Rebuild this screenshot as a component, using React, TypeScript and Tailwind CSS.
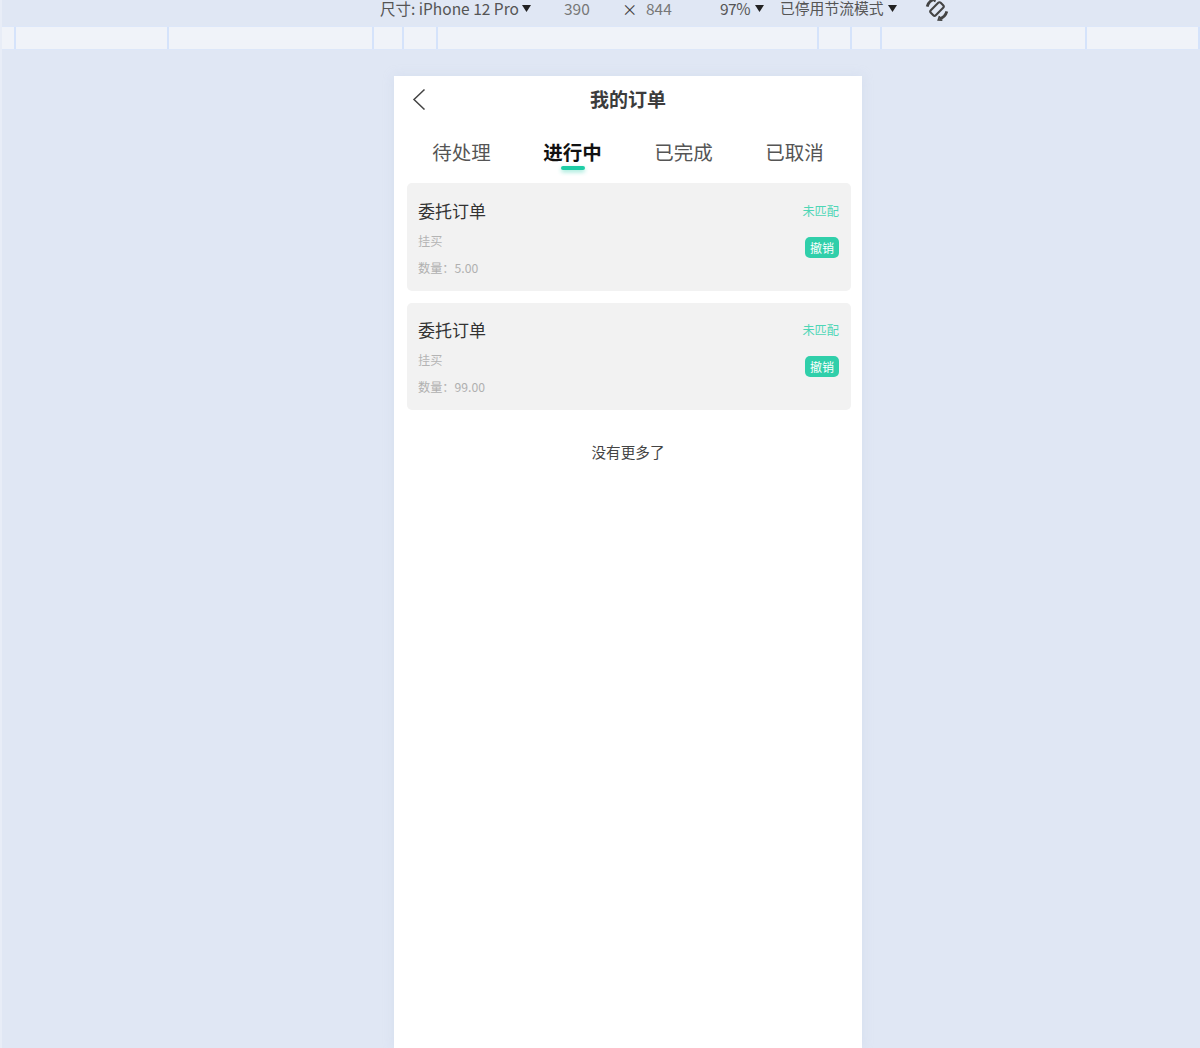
const rulerSegments = [
  "w-[13px]",
  "w-[153px]",
  "w-[205px]",
  "w-[30px]",
  "w-[34px]",
  "w-[381px]",
  "w-[33px]",
  "w-[30px]",
  "w-[205px]",
  "flex-1 border-r-0",
];

const tabs = ["待处理", "进行中", "已完成", "已取消"];

const orders = [
  { amount: "5.00", box: "h-[108px] pt-[17px]" },
  { amount: "99.00", box: "h-[107px] pt-[16px]" },
];

const Caret = ({ className }: { className: string }) => (
  <svg width="9" height="7" viewBox="0 0 9 7" className={className}>
    <path d="M0 0h9L4.5 7z" fill="#222" />
  </svg>
);

const RotateIcon = () => (
  <svg width="28" height="28" viewBox="0 0 24 24" fill="none" stroke="#444" className="ml-[26px] -mt-[5px] shrink-0">
    <g transform="rotate(45 12 12)">
      <rect x="9" y="6" width="6" height="12" rx="1.5" strokeWidth="1.8" />
      <path d="M4.6 16.5a9 9 0 0 1 0-9" strokeWidth="2.4" />
      <path d="M19.4 7.5a9 9 0 0 1 0 9" strokeWidth="2.4" />
      <path d="M2 8.5l2.6-2.4 1.6 3.2" strokeWidth="1.4" />
      <path d="M22 15.5l-2.6 2.4-1.6-3.2" strokeWidth="1.4" />
    </g>
  </svg>
);

const DeviceToolbar = () => (
  <div className="h-[26px] flex items-start pl-[378px] text-[15.5px] leading-[16px] text-[#555]">
    <span className="whitespace-nowrap w-[138px]">尺寸: iPhone 12 Pro</span>
    <Caret className="ml-[4px] mt-[5px] shrink-0" />
    <span className="ml-[33px] text-[#777] w-[27px]">390</span>
    <span className="ml-[31px] w-[11px] text-[#444] mt-[1px]">×</span>
    <span className="ml-[13px] text-[#777] w-[26px]">844</span>
    <span className="ml-[48px] w-[31px] tracking-[-0.5px] whitespace-nowrap">97%</span>
    <Caret className="ml-[4px] mt-[5px] shrink-0" />
    <span className="ml-[16px] w-[104px] whitespace-nowrap text-[14.8px]">已停用节流模式</span>
    <Caret className="ml-[4px] mt-[5px] shrink-0" />
    <RotateIcon />
  </div>
);

const Ruler = () => (
  <div className="h-[24px] flex bg-[#f0f3f9] border-y border-[#dde7f9]">
    <div className="w-[1px] shrink-0" />
    {rulerSegments.map((segment, i) => (
      <div key={i} className={`${segment} shrink-0 border-r-2 border-[#d5e3fb]`} />
    ))}
  </div>
);

const OrderCard = ({ amount, box }: { amount: string; box: string }) => (
  <div className={`${box} rounded-[5px] bg-[#f2f2f2] pl-[11px] pr-[12px] flex justify-between`}>
    <div className="flex flex-col">
      <p className="text-[17px] leading-[22px] text-[#333]">委托订单</p>
      <p className="mt-[10px] text-[12.2px] leading-[18px] text-[#b4b4b4]">挂买</p>
      <p className="mt-[9px] text-[12.2px] leading-[18px] text-[#b0b0b0]">数量：{amount}</p>
    </div>
    <div className="flex flex-col items-end pt-[1px]">
      <p className="text-[12.2px] leading-[20px] text-[#4ed6b6]">未匹配</p>
      <button className="mt-[16px] h-[21px] w-[34px] rounded-[5px] bg-[#30cfaa] text-[12px] leading-[21px] text-white">
        撤销
      </button>
    </div>
  </div>
);

export default function App() {
  return (
    <div
      className="h-[1048px] overflow-hidden bg-[#e0e7f4] border-l-2 border-[#e8edf7] flex flex-col"
      style={{ fontFamily: '"Noto Sans CJK SC", "Open Sans", sans-serif' }}
    >
      <DeviceToolbar />
      <Ruler />

      <div className="flex-1 flex justify-center pt-[26px] pl-[54px]">
        <div className="w-[468px] bg-white shadow-[0_0_10px_rgba(190,203,228,0.35)] flex flex-col">
          {/* Header */}
          <div className="h-[48px] flex items-center justify-between px-[18px] pb-[2px] shrink-0">
            <svg width="14" height="22" viewBox="0 0 14 22" fill="none" stroke="#444" strokeWidth="1.5">
              <path d="M12.5 1.5L2 11.5l10.5 10" />
            </svg>
            <p className="text-[19px] font-bold text-[#3c3c3c] leading-[24px]">我的订单</p>
            <div className="w-[14px]" />
          </div>

          {/* Tabs */}
          <div className="h-[59px] pt-[13px] px-[12px] grid grid-cols-4 shrink-0">
            {tabs.map((tab, i) => (
              <div key={tab} className="flex flex-col items-center">
                <p className={`text-[19.5px] leading-[30px] ${i == 1 ? "font-bold text-[#111]" : "text-[#555]"}`}>{tab}</p>
                {i == 1 && <div className="-mt-[1px] h-[4px] w-[24px] rounded-full bg-[#1fcda6] shadow-[0_2px_4px_rgba(31,205,166,0.45)]" />}
              </div>
            ))}
          </div>

          {/* Orders */}
          <div className="pl-[13px] pr-[11px] flex flex-col gap-[12px]">
            {orders.map((order, i) => (
              <OrderCard key={i} amount={order.amount} box={order.box} />
            ))}
          </div>

          <p className="mt-[32px] text-center text-[14.6px] leading-[20px] text-[#444]">没有更多了</p>
        </div>
      </div>
    </div>
  );
}
